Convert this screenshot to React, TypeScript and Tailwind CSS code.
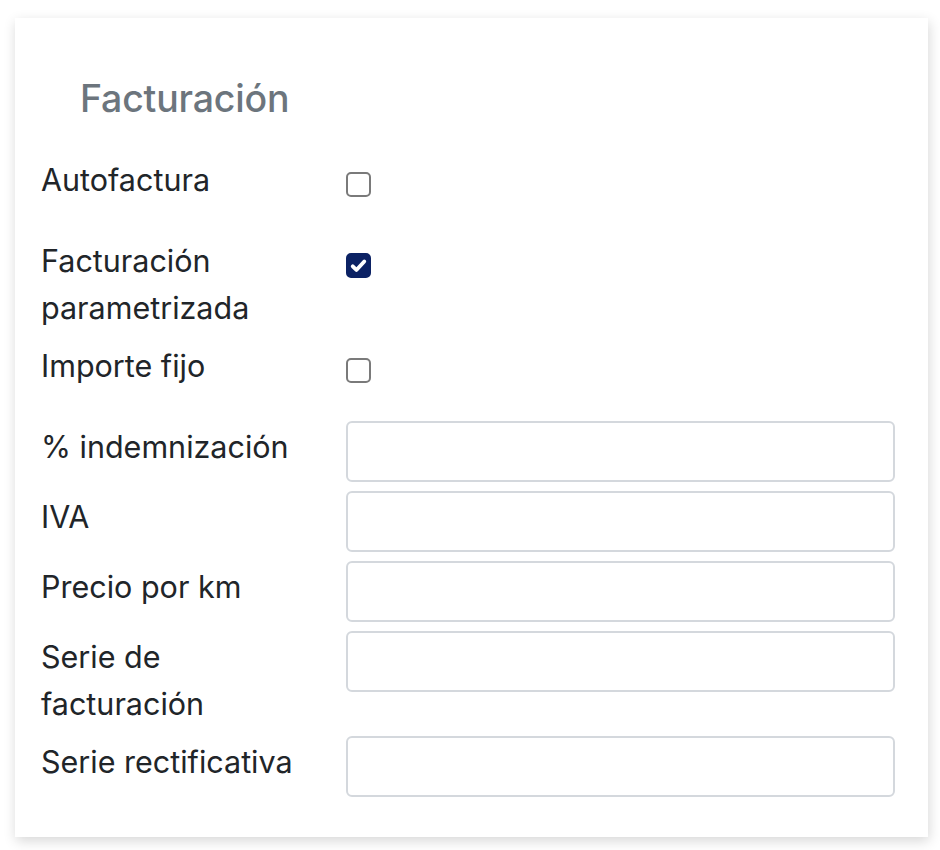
import React, { useState } from 'react';

type Field =
  | { kind: 'check'; label: string }
  | { kind: 'input'; label: string };

const fields: Field[] = [
  { kind: 'check', label: 'Autofactura' },
  { kind: 'check', label: 'Facturación parametrizada' },
  { kind: 'check', label: 'Importe fijo' },
  { kind: 'input', label: '% indemnización' },
  { kind: 'input', label: 'IVA' },
  { kind: 'input', label: 'Precio por km' },
  { kind: 'input', label: 'Serie de facturación' },
  { kind: 'input', label: 'Serie rectificativa' },
];

const Checkbox: React.FC<{ checked: boolean; onToggle: () => void }> = ({ checked, onToggle }) => (
  <button
    type="button"
    onClick={onToggle}
    className={
      checked
        ? 'w-[25px] h-[25px] rounded-[5px] bg-[#0c2264] border-2 border-[#0c2264] flex items-center justify-center'
        : 'w-[25px] h-[25px] rounded-[5px] bg-white border-2 border-[#7a7a7a]'
    }
  >
    {checked && (
      <svg width="21" height="21" viewBox="0 0 16 16" fill="none">
        <path d="M3.6 8.6l2.8 2.8L12.4 4.9" stroke="#ffffff" strokeWidth="2.9" strokeLinecap="round" strokeLinejoin="round" />
      </svg>
    )}
  </button>
);

const App: React.FC = () => {
  const [checks, setChecks] = useState<Record<string, boolean>>({
    Autofactura: false,
    'Facturación parametrizada': true,
    'Importe fijo': false,
  });

  return (
    <div className="min-h-[850px] bg-white pt-[18px] pl-[15px] font-['Inter','Noto_Sans',sans-serif]">
      <div className="w-[913px] h-[819px] bg-white shadow-[1px_4px_12px_rgba(0,0,0,0.16)] pl-[26px] pr-[33px] pt-[57px]">
        <h5 className="pl-[39px] text-[37.5px] leading-[48px] font-medium text-[#6c757d] tracking-[-0.2px]">
          Facturación
        </h5>
        <div className="mt-[31px] flex flex-col gap-[9px]">
          {fields.map((f) => (
            <div key={f.label} className="flex">
              <label className="w-[305px] shrink-0 pr-[28px] pt-[2px] text-[30.5px] leading-[47px] text-[#212529]">
                {f.label}
              </label>
              {f.kind === 'check' ? (
                <div className="h-[72px] pt-[18px]">
                  <Checkbox
                    checked={checks[f.label]}
                    onToggle={() => setChecks({ ...checks, [f.label]: !checks[f.label] })}
                  />
                </div>
              ) : (
                <input
                  type="text"
                  className="w-[549px] h-[61px] rounded-[6px] border-2 border-[#d4d8dd] bg-white px-4 text-[30px] outline-none"
                />
              )}
            </div>
          ))}
        </div>
      </div>
    </div>
  );
};

export default App;
